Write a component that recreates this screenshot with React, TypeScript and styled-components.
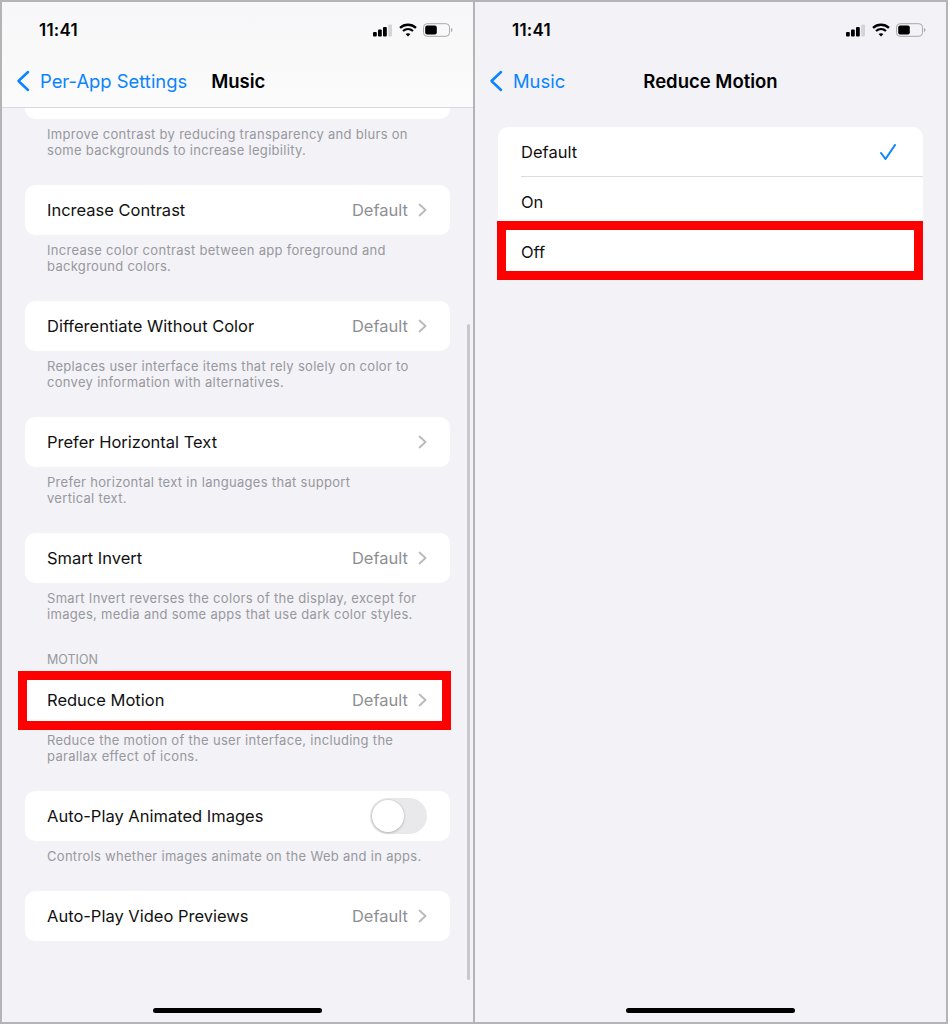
import styled, { createGlobalStyle } from "styled-components";

const GlobalStyle = createGlobalStyle`
    html, body {
        margin: 0;
        padding: 0;
        background: #f2f2f7;
    }
    body {
        font-family: Inter, "Noto Sans", "Liberation Sans", sans-serif;
        -webkit-font-smoothing: antialiased;
    }
`;

function SignalIcon() {
    return (
        <svg width="20" height="13" viewBox="0 0 20 13">
            <rect x="0" y="8" width="3.8" height="4.5" rx="1" fill="#000" />
            <rect x="5" y="5.6" width="3.8" height="7" rx="1" fill="#000" />
            <rect x="10" y="3" width="3.8" height="9.5" rx="1" fill="#000" />
            <rect x="15.2" y="0.5" width="3.8" height="12" rx="1" fill="#d4d4d6" />
        </svg>
    );
}

function WifiIcon() {
    return (
        <svg width="18" height="14" viewBox="0 0 18 14" fill="none" stroke="#000" strokeWidth="2.3">
            <path d="M1 4.9C5.6 0.7 12.4 0.7 17 4.9" />
            <path d="M4 8C6.9 5.5 11.1 5.5 14 8" />
            <path d="M9 13.6L6.6 11C8 9.9 10 9.9 11.4 11Z" fill="#000" stroke="none" />
        </svg>
    );
}

function BatteryIcon() {
    return (
        <svg width="30" height="14" viewBox="0 0 30 14">
            <rect x="0.5" y="0.7" width="26" height="12.6" rx="3.6" fill="none" stroke="#a9a9ab" />
            <rect x="2.2" y="2.4" width="11.6" height="9.2" rx="2" fill="#000" />
            <path d="M28 5v4c.9-.3 1.4-1.1 1.4-2s-.5-1.7-1.4-2z" fill="#a9a9ab" />
        </svg>
    );
}

function BackIcon() {
    return (
        <svg width="14" height="22" viewBox="0 0 14 22" fill="none" stroke="#0a84ff" strokeWidth="2.5" strokeLinecap="round" strokeLinejoin="round">
            <path d="M12 2L2.5 11L12 20" />
        </svg>
    );
}

function ChevronIcon() {
    return (
        <svg width="9" height="14" viewBox="0 0 9 14" fill="none" stroke="#b7b7bb" strokeWidth="1.7" strokeLinecap="round" strokeLinejoin="round">
            <path d="M1.5 1.5L7.5 7L1.5 12.5" />
        </svg>
    );
}

function CheckIcon() {
    return (
        <svg width="16" height="16" viewBox="0 0 16 16" fill="none" stroke="#0a84ff" strokeWidth="2" strokeLinecap="round" strokeLinejoin="round">
            <path d="M1 9L5.5 15L15 1" />
        </svg>
    );
}

function StatusBar() {
    return (
        <StatusRow>
            <Clock>11:41</Clock>
            <StatusIcons>
                <SignalIcon />
                <WifiIcon />
                <BatteryIcon />
            </StatusIcons>
        </StatusRow>
    );
}

interface SettingProps {
    label: string
    value?: string
    note?: string[]
    marked?: boolean
    toggle?: boolean
}

function Setting({ label, value, note, marked, toggle }: SettingProps) {
    return (
        <>
            <Row>
                <RowLabel>{label}</RowLabel>
                {toggle ? (
                    <Toggle><Knob /></Toggle>
                ) : (
                    <RowRight>
                        {value && <RowValue>{value}</RowValue>}
                        <ChevronIcon />
                    </RowRight>
                )}
                {marked && <Highlight />}
            </Row>
            {note && (
                <Note>
                    {note.map((line) => <div key={line}>{line}</div>)}
                </Note>
            )}
        </>
    );
}

export default function App() {
    return (
        <Page>
            <GlobalStyle />
            <LeftPhone>
                <TopBar>
                    <StatusBar />
                    <NavBar>
                        <BackIcon />
                        <BackLabel>Per-App Settings</BackLabel>
                        <NavTitle>Music</NavTitle>
                    </NavBar>
                </TopBar>
                <Settings>
                    <CutCard />
                    <Note>
                        <div>Improve contrast by reducing transparency and blurs on</div>
                        <div>some backgrounds to increase legibility.</div>
                    </Note>
                    <Setting label="Increase Contrast" value="Default" note={["Increase color contrast between app foreground and", "background colors."]} />
                    <Setting label="Differentiate Without Color" value="Default" note={["Replaces user interface items that rely solely on color to", "convey information with alternatives."]} />
                    <Setting label="Prefer Horizontal Text" note={["Prefer horizontal text in languages that support", "vertical text."]} />
                    <Setting label="Smart Invert" value="Default" note={["Smart Invert reverses the colors of the display, except for", "images, media and some apps that use dark color styles."]} />
                    <SectionTitle>MOTION</SectionTitle>
                    <Setting marked label="Reduce Motion" value="Default" note={["Reduce the motion of the user interface, including the", "parallax effect of icons."]} />
                    <Setting toggle label="Auto-Play Animated Images" note={["Controls whether images animate on the Web and in apps."]} />
                    <Setting label="Auto-Play Video Previews" value="Default" />
                </Settings>
                <ScrollThumb />
                <HomeBar />
            </LeftPhone>
            <RightPhone>
                <StatusBar />
                <NavBar>
                    <BackIcon />
                    <BackLabel>Music</BackLabel>
                    <CenterTitle>Reduce Motion</CenterTitle>
                </NavBar>
                <OptionCard>
                    <Option>
                        <RowLabel>Default</RowLabel>
                        <CheckIcon />
                    </Option>
                    <Option><RowLabel>On</RowLabel></Option>
                    <Option $last>
                        <RowLabel>Off</RowLabel>
                        <OptionHighlight />
                    </Option>
                </OptionCard>
                <HomeBar />
            </RightPhone>
        </Page>
    );
}

const Page = styled.div`
    display: flex;
    width: 948px;
    height: 1024px;
    overflow: hidden;
    background: #f2f2f7;
    color: #000;
`;

const LeftPhone = styled.div`
    position: relative;
    box-sizing: border-box;
    width: 475px;
    height: 1024px;
    border: 2px solid #b4b4b6;
    overflow: hidden;
`;

const RightPhone = styled.div`
    position: relative;
    box-sizing: border-box;
    width: 473px;
    height: 1024px;
    border: 2px solid #b4b4b6;
    border-left-width: 0;
    overflow: hidden;
`;

const TopBar = styled.div`
    background: linear-gradient(#f7f7f9, #fbfbfb);
    border-bottom: 1px solid #d9d9dc;
    height: 105px;
`;

const StatusRow = styled.div`
    display: flex;
    align-items: center;
    justify-content: space-between;
    height: 26px;
    padding: 15px 20px 0 37px;
`;

const Clock = styled.div`
    font-size: 17px;
    font-weight: 600;
    letter-spacing: 0.2px;
`;

const StatusIcons = styled.div`
    display: flex;
    align-items: center;
    gap: 6px;
`;

const NavBar = styled.div`
    position: relative;
    display: flex;
    align-items: center;
    height: 24px;
    margin-top: 26px;
    padding-left: 14px;
`;

const BackLabel = styled.div`
    margin-left: 10px;
    color: #0a84ff;
    font-size: 18.4px;
`;

const NavTitle = styled.div`
    margin-left: 24px;
    font-size: 18.5px;
    font-weight: 600;
`;

const CenterTitle = styled.div`
    position: absolute;
    left: 0;
    right: 0;
    text-align: center;
    font-size: 18.5px;
    font-weight: 600;
`;

const Settings = styled.div`
    padding: 0 23px;
`;

const CutCard = styled.div`
    height: 11px;
    background: #fff;
    border-radius: 0 0 10px 10px;
`;

const Row = styled.div`
    position: relative;
    display: flex;
    align-items: center;
    justify-content: space-between;
    height: 50px;
    padding: 0 23px 0 22px;
    background: #fff;
    border-radius: 10px;
`;

const RowLabel = styled.div`
    font-size: 16.5px;
    color: #111;
`;

const RowRight = styled.div`
    display: flex;
    align-items: center;
    gap: 10px;
`;

const RowValue = styled.div`
    font-size: 16.5px;
    color: #8f8f93;
`;

const Note = styled.div`
    padding: 7px 22px 27px;
    font-size: 13px;
    line-height: 16px;
    letter-spacing: 0.3px;
    color: #98989d;
`;

const SectionTitle = styled.div`
    margin-top: 3px;
    padding: 0 22px 7px;
    font-size: 12.5px;
    line-height: 16px;
    color: #98989d;
`;

const Highlight = styled.div`
    position: absolute;
    top: -4px;
    right: -1px;
    bottom: -5px;
    left: -7px;
    border: 9.5px solid #fe0000;
`;

const Toggle = styled.div`
    width: 57px;
    height: 36px;
    padding: 2px;
    box-sizing: border-box;
    border-radius: 18px;
    background: #e9e9eb;
`;

const Knob = styled.div`
    width: 32px;
    height: 32px;
    border-radius: 50%;
    background: #fff;
    box-shadow: 0 0 0 1px rgba(0, 0, 0, 0.04), 0 1px 3px rgba(0, 0, 0, 0.2);
`;

const ScrollThumb = styled.div`
    position: absolute;
    top: 322px;
    right: 3px;
    width: 3px;
    height: 656px;
    border-radius: 2px;
    background: #c9c9cd;
`;

const HomeBar = styled.div`
    position: absolute;
    bottom: 9px;
    left: 151px;
    width: 169px;
    height: 5px;
    border-radius: 3px;
    background: #000;
`;

const OptionCard = styled.div`
    margin: 34px 23px 0;
    background: #fff;
    border-radius: 10px;
`;

const Option = styled.div<{ $last?: boolean }>`
    position: relative;
    display: flex;
    align-items: center;
    justify-content: space-between;
    height: 50px;
    margin-left: 23px;
    padding-right: 27px;
    box-sizing: border-box;
    border-bottom: ${(props) => (props.$last ? "none" : "1px solid #dcdcdf")};
`;

const OptionHighlight = styled.div`
    position: absolute;
    top: -6px;
    right: 0;
    bottom: -3px;
    left: -24px;
    border: 9.5px solid #fe0000;
`;
